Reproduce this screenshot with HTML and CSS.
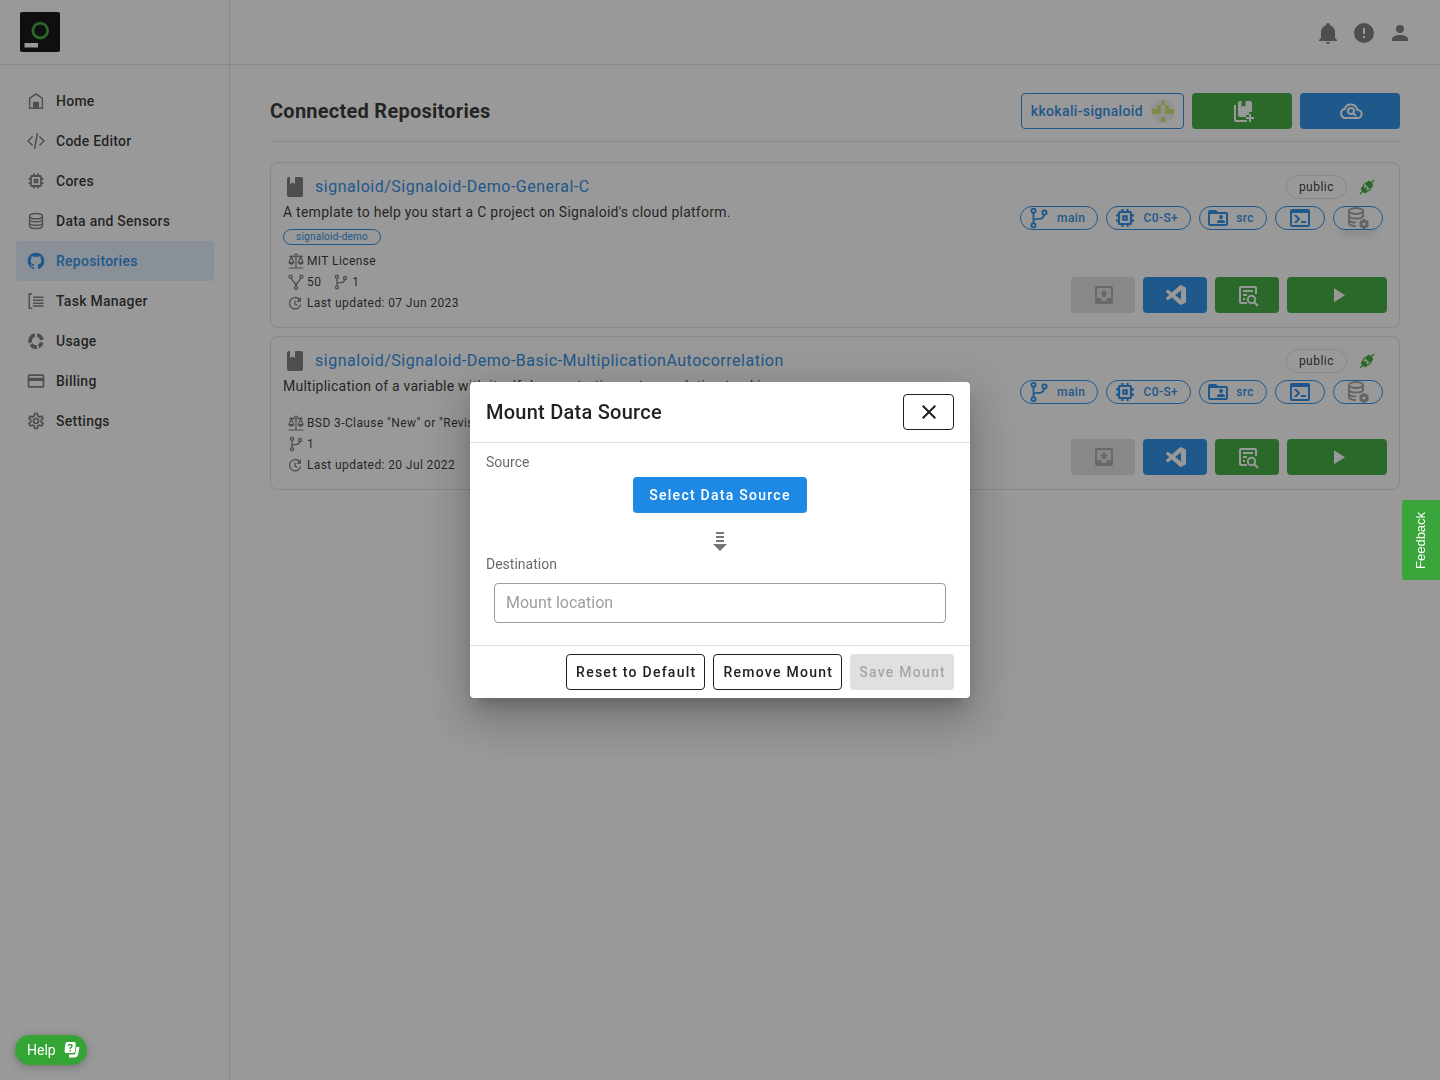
FILE: index.html
```html
<!DOCTYPE html>
<html lang="en">
  <head>
    <meta charset="utf-8">
    <title>Connected Repositories</title>
    <link rel="stylesheet" href="styles.css">
  </head>
  <body>
    <!-- Shared icons -->
    <svg class="sprite" aria-hidden="true">
      <symbol id="book" viewBox="0 0 24 24"><path d="M6 2H7V9L9.500 7.500L12 9V2H18A2 2 0 0 1 20 4V20A2 2 0 0 1 18 22H6A2 2 0 0 1 4 20V4A2 2 0 0 1 6 2Z"/></symbol>
      <symbol id="branch" viewBox="0 0 24 24"><g fill="none" stroke="currentColor" stroke-width="2"><circle cx="6" cy="4" r="2.300"/><circle cx="6" cy="20" r="2.300"/><circle cx="18" cy="6" r="2.300"/><path d="M6 6.500V17.500M6 15.500C6 13 8 13 11 13C14.500 13 17 12 17.500 8.500"/></g></symbol>
      <symbol id="fork" viewBox="0 0 24 24"><g fill="none" stroke="currentColor" stroke-width="2"><circle cx="4" cy="4" r="2.300"/><circle cx="20" cy="4" r="2.300"/><circle cx="12" cy="20.500" r="2.300"/><path d="M5 6.500C6 11 12 12 12 18C12 12 18 11 19 6.500"/></g></symbol>
      <symbol id="chip" viewBox="-2 -2 28 28"><path fill="none" stroke="currentColor" stroke-width="2.500" d="M6 5H18A1 1 0 0 1 19 6V18A1 1 0 0 1 18 19H6A1 1 0 0 1 5 18V6A1 1 0 0 1 6 5ZM10 10H14V14H10ZM9 1.500V5M15 1.500V5M9 19V22.500M15 19V22.500M1.500 9H5M1.500 15H5M19 9H22.500M19 15H22.500"/></symbol>
      <symbol id="database" viewBox="0 0 24 24"><g fill="none" stroke="currentColor" stroke-width="2"><ellipse cx="12" cy="5.500" rx="8.500" ry="3.500"/><path d="M3.500 5.500V18.500C3.500 23 20.500 23 20.500 18.500V5.500M3.500 10C3.500 14 20.500 14 20.500 10M3.500 14.500C3.500 18.500 20.500 18.500 20.500 14.500"/></g></symbol>
      <symbol id="database-cog" viewBox="0 0 24 24"><g fill="none" stroke="currentColor" stroke-width="2"><ellipse cx="10" cy="5" rx="7" ry="3"/><path d="M3 5V17C3 19 6 20 10 20M17 5V11M3 9.500C3 13.500 17 13.500 17 9.500M3 13.500C3 15.500 6 16.500 10 16.500"/></g><path fill-rule="evenodd" d="M16.500 13H19.500L19.900 14.700L21.500 14.200L23 16.700L21.800 18L23 19.300L21.500 21.800L19.900 21.300L19.500 23H16.500L16.100 21.300L14.500 21.800L13 19.300L14.200 18L13 16.700L14.500 14.200L16.100 14.700ZM18 16.400A1.600 1.600 0 1 0 18 19.600A1.600 1.600 0 1 0 18 16.400Z"/></symbol>
      <symbol id="folder" viewBox="0 0 24 24"><path fill-rule="evenodd" d="M4 4H10L12 6H20A2 2 0 0 1 22 8V18A2 2 0 0 1 20 20H4A2 2 0 0 1 2 18V6A2 2 0 0 1 4 4ZM4 8V18H20V8Z"/><circle cx="15" cy="11" r="2"/><path d="M11 17V16C11 14.500 13 14 15 14S19 14.500 19 16V17Z"/></symbol>
      <symbol id="console" viewBox="0 0 24 24"><path d="M20,19V7H4V19H20M20,3A2,2 0 0,1 22,5V19A2,2 0 0,1 20,21H4A2,2 0 0,1 2,19V5C2,3.89 2.9,3 4,3H20M13,17V15H18V17H13M9.58,13L5.57,9H8.4L11.7,12.3C12.09,12.69 12.09,13.33 11.7,13.72L8.42,17H5.59L9.58,13Z"/></symbol>
      <symbol id="plug" viewBox="0 0 24 24"><g transform="rotate(45 12 12)"><path d="M6.500 9.500V6A3.500 3.500 0 0 1 10 2.500H11V-3H13V2.500H14A3.500 3.500 0 0 1 17.500 6V9.500H19V11.200H5V9.500ZM5 12.800H8.500V15.500H10.500V12.800H13.500V15.500H15.500V12.800H19V14.500H17.500V18A3.500 3.500 0 0 1 14 21.500H13V27H11V21.500H10A3.500 3.500 0 0 1 6.500 18V14.500H5Z"/></g></symbol>
      <symbol id="scale" viewBox="0 0 24 24"><path fill="none" stroke="currentColor" stroke-width="1.800" d="M1 22.500H23M12 5V22M2 5H9M15 5H22M5 5L1.500 14.500H8.500ZM19 5L15.500 14.500H22.500ZM2 15Q5 18 8 15M16 15Q19 18 22 15"/><circle cx="12" cy="4" r="2.300" fill="none" stroke="currentColor" stroke-width="1.800"/></symbol>
      <symbol id="update" viewBox="0 0 24 24"><path fill="none" stroke="currentColor" stroke-width="2" d="M17 6.500A8.500 8.500 0 1 0 19 14.500M10.500 8.500V13.500L14 15.500"/><path d="M19.500 3V10H12.500Z"/></symbol>
      <symbol id="inbox-up" viewBox="0 0 24 24"><path d="M14,14H10V11H8L12,7L16,11H14V14M5,15V5H19V15H15A3,3 0 0,1 12,18A3,3 0 0,1 9,15H5M19,3H5C3.89,3 3,3.9 3,5V19A2,2 0 0,0 5,21H19A2,2 0 0,0 21,19V5A2,2 0 0,0 19,3"/></symbol>
      <symbol id="vscode" viewBox="0 0 24 24"><path fill-rule="evenodd" d="M23.15 2.587L18.21 .21A1.494 1.494 0 0 0 16.505 .5L7.046 9.13L2.926 6.002A1 1 0 0 0 1.65 6.059L.33 7.26A1 1 0 0 0 .33 8.738L3.9 12L.326 15.26A1 1 0 0 0 .327 16.739L1.65 17.94A1 1 0 0 0 2.926 17.997L7.046 14.869L16.506 23.499A1.492 1.492 0 0 0 18.21 23.788L23.152 21.411A1.5 1.5 0 0 0 24 20.06V3.939A1.5 1.5 0 0 0 23.15 2.587M18 17.448L10.826 12L18 6.552Z"/></symbol>
      <symbol id="doc-search" viewBox="0 0 24 24"><g fill="none" stroke="currentColor" stroke-width="2"><path d="M11 20H5A1 1 0 0 1 4 19V5A1 1 0 0 1 5 4H19A1 1 0 0 1 20 5V11M7 8H17M7 12H11M7 16H9"/><circle cx="15.500" cy="16.500" r="3.700"/><path d="M18.200 19.200L22 23"/></g></symbol>
      <symbol id="play" viewBox="0 0 24 24"><path d="M8,5.140V19.140L19,12.140L8,5.140Z"/></symbol>
    </svg>

    <div class="layout">
      <aside class="sidebar">
        <div class="brand">
          <a href="#" aria-label="Signaloid">
            <svg class="logo" viewBox="0 0 40 40"><rect width="40" height="40" rx="2" fill="#000"/><circle cx="20.300" cy="18.600" r="7.400" fill="none" stroke="#37a437" stroke-width="2.800"/><rect x="4.500" y="31" width="13.500" height="4.500" fill="#fff"/></svg>
          </a>
        </div>
        <nav class="menu">
          <a href="#"><svg class="icon-s" viewBox="0 0 24 24"><path fill="none" stroke="currentColor" stroke-width="2" d="M3.500 8.500L12 2.500L20.500 8.500V21.500H3.500Z"/><path d="M8 13H16V21H8Z"/></svg>Home</a>
          <a href="#"><svg class="icon-s" viewBox="0 0 24 24"><path fill="none" stroke="currentColor" stroke-width="2" d="M7.500 6L1.500 12L7.500 18M16.500 6L22.500 12L16.500 18M14 1.500L10 22.500"/></svg>Code Editor</a>
          <a href="#"><svg class="icon-m"><use href="#chip"/></svg>Cores</a>
          <a href="#"><svg class="icon-s"><use href="#database"/></svg>Data and Sensors</a>
          <a href="#" class="active"><svg class="icon-m" viewBox="0 0 24 24"><path d="M12,2A10,10 0 0,0 2,12C2,16.42 4.87,20.17 8.84,21.5C9.34,21.58 9.5,21.27 9.5,21C9.5,20.77 9.5,20.14 9.5,19.31C6.73,19.91 6.14,17.97 6.14,17.97C5.68,16.81 5.03,16.5 5.03,16.5C4.12,15.88 5.1,15.9 5.1,15.9C6.1,15.97 6.63,16.93 6.63,16.93C7.5,18.45 8.97,18 9.54,17.76C9.63,17.11 9.89,16.67 10.17,16.42C7.95,16.17 5.62,15.31 5.62,11.5C5.62,10.39 6,9.5 6.65,8.79C6.55,8.54 6.2,7.5 6.75,6.15C6.75,6.15 7.59,5.88 9.5,7.17C10.29,6.95 11.15,6.84 12,6.84C12.85,6.84 13.71,6.95 14.5,7.17C16.41,5.88 17.25,6.15 17.25,6.15C17.8,7.5 17.45,8.54 17.35,8.79C18,9.5 18.38,10.39 18.38,11.5C18.38,15.32 16.04,16.16 13.81,16.41C14.17,16.72 14.5,17.33 14.5,18.26C14.5,19.6 14.5,20.68 14.5,21C14.5,21.27 14.66,21.59 15.17,21.5C19.14,20.16 22,16.42 22,12A10,10 0 0,0 12,2Z"/></svg>Repositories</a>
          <a href="#"><svg class="icon-s" viewBox="0 0 24 24"><path fill="none" stroke="currentColor" stroke-width="2" d="M7 2.500H3V21.500H7M8 7H22M8 11H22M8 15H22M8 18.500H22"/></svg>Task Manager</a>
          <a href="#"><svg class="icon-s" viewBox="0 0 24 24"><g fill="none" stroke="currentColor" stroke-width="5"><path d="M13.500 4A8 8 0 0 1 19.800 10.500M19.800 14A8 8 0 0 1 15.500 19.200M13.500 20A8 8 0 0 1 5.500 16.500M4.500 14.500A8 8 0 0 1 10.500 4"/></g></svg>Usage</a>
          <a href="#"><svg class="icon-m" viewBox="0 0 24 24"><path d="M20,4H4A2,2 0 0,0 2,6V18A2,2 0 0,0 4,20H20A2,2 0 0,0 22,18V6A2,2 0 0,0 20,4M20,18H4V12H20V18M20,8H4V6H20V8Z"/></svg>Billing</a>
          <a href="#"><svg class="icon-m" viewBox="0 0 24 24"><path d="M12,8A4,4 0 0,1 16,12A4,4 0 0,1 12,16A4,4 0 0,1 8,12A4,4 0 0,1 12,8M12,10A2,2 0 0,0 10,12A2,2 0 0,0 12,14A2,2 0 0,0 14,12A2,2 0 0,0 12,10M10,22C9.75,22 9.54,21.82 9.5,21.58L9.13,18.93C8.5,18.68 7.96,18.34 7.44,17.94L4.95,18.95C4.73,19.03 4.46,18.95 4.34,18.73L2.34,15.27C2.21,15.05 2.27,14.78 2.46,14.63L4.57,12.97L4.5,12L4.57,11L2.46,9.37C2.27,9.22 2.21,8.95 2.34,8.73L4.34,5.27C4.46,5.05 4.73,4.96 4.95,5.05L7.44,6.05C7.96,5.66 8.5,5.32 9.13,5.07L9.5,2.42C9.54,2.18 9.75,2 10,2H14C14.25,2 14.46,2.18 14.5,2.42L14.87,5.07C15.5,5.32 16.04,5.66 16.56,6.05L19.05,5.05C19.27,4.96 19.54,5.05 19.66,5.27L21.66,8.73C21.79,8.95 21.73,9.22 21.54,9.37L19.43,11L19.5,12L19.43,13L21.54,14.63C21.73,14.78 21.79,15.05 21.66,15.27L19.66,18.73C19.54,18.95 19.27,19.04 19.05,18.95L16.56,17.95C16.04,18.34 15.5,18.68 14.87,18.93L14.5,21.58C14.46,21.82 14.25,22 14,22H10M11.25,4L10.88,6.61C9.68,6.86 8.62,7.5 7.85,8.39L5.44,7.35L4.69,8.65L6.8,10.2C6.4,11.37 6.4,12.64 6.8,13.8L4.68,15.36L5.43,16.66L7.86,15.62C8.63,16.5 9.68,17.14 10.87,17.38L11.24,20H12.76L13.13,17.39C14.32,17.14 15.37,16.5 16.14,15.62L18.57,16.66L19.32,15.36L17.2,13.81C17.6,12.64 17.6,11.37 17.2,10.2L19.31,8.65L18.56,7.35L16.15,8.39C15.38,7.5 14.32,6.86 13.12,6.62L12.75,4H11.25Z"/></svg>Settings</a>
        </nav>
      </aside>

      <div class="page">
        <header class="topbar">
          <button type="button" aria-label="Notifications"><svg class="icon" viewBox="0 0 24 24"><path d="M21,19V20H3V19L5,17V11C5,7.9 7.03,5.17 10,4.29C10,4.19 10,4.1 10,4A2,2 0 0,1 12,2A2,2 0 0,1 14,4C14,4.1 14,4.19 14,4.29C16.97,5.17 19,7.9 19,11V17L21,19M14,21A2,2 0 0,1 12,23A2,2 0 0,1 10,21"/></svg></button>
          <button type="button" aria-label="Alerts"><svg class="icon" viewBox="0 0 24 24"><path d="M13,13H11V7H13M13,17H11V15H13M12,2A10,10 0 0,0 2,12A10,10 0 0,0 12,22A10,10 0 0,0 22,12A10,10 0 0,0 12,2Z"/></svg></button>
          <button type="button" aria-label="Account"><svg class="icon" viewBox="0 0 24 24"><path d="M12,4A4,4 0 0,1 16,8A4,4 0 0,1 12,12A4,4 0 0,1 8,8A4,4 0 0,1 12,4M12,14C16.42,14 20,15.79 20,18V20H4V18C4,15.79 7.58,14 12,14Z"/></svg></button>
        </header>

        <main class="content">
          <div class="heading">
            <h1>Connected Repositories</h1>
            <button type="button" class="btn user">kkokali-signaloid
              <svg class="icon" viewBox="0 0 24 24"><circle cx="12" cy="12" r="12" fill="#f0f0f0"/><path fill="#d3e06c" d="M10 2H14V6H10ZM6 6H10V10H6ZM14 6H18V10H14ZM1 10H10V15H1ZM14 10H23V15H14ZM10 18H14V23H10Z"/></svg>
            </button>
            <button type="button" class="btn green wide" aria-label="Add repository"><svg class="icon" viewBox="-2 -1 24 24"><path d="M1 5H3V20H14V22H3A2 2 0 0 1 1 20ZM7 1H8.500V7L10.500 5.500L12.500 7V1H17A2 2 0 0 1 19 3V12H16V15H13V17H7A2 2 0 0 1 5 15V3A2 2 0 0 1 7 1ZM16 14H18V17H21V19H18V22H16V19H13V17H16Z"/></svg></button>
            <button type="button" class="btn blue wide" aria-label="Search cloud"><svg class="icon" viewBox="0 0 24 24"><g fill="none" stroke="currentColor" stroke-width="2"><path d="M6.500 19A4.500 4.500 0 0 1 5.700 10.100A6.500 6.500 0 0 1 18.300 11A4 4 0 0 1 19 19Z"/><circle cx="12" cy="12" r="3"/><path d="M14 14L17 17"/></g></svg></button>
          </div>

          <article class="repo">
            <div class="info">
              <h2><svg class="icon"><use href="#book"/></svg><a href="#">signaloid/Signaloid-Demo-General-C</a></h2>
              <p>A template to help you start a C project on Signaloid's cloud platform.</p>
              <div class="topics"><span class="topic">signaloid-demo</span></div>
              <ul class="meta">
                <li><svg class="icon-xs"><use href="#scale"/></svg>MIT License</li>
                <li><svg class="icon-xs"><use href="#fork"/></svg>50 <svg class="icon-xs next"><use href="#branch"/></svg>1</li>
                <li><svg class="icon-xs"><use href="#update"/></svg>Last updated: 07 Jun 2023</li>
              </ul>
            </div>
            <div class="actions">
              <div class="status"><span class="public">public</span><svg class="icon-xs"><use href="#plug"/></svg></div>
              <div class="chips">
                <button type="button"><svg class="icon branch"><use href="#branch"/></svg>main</button>
                <button type="button"><svg class="icon"><use href="#chip"/></svg>C0-S+</button>
                <button type="button"><svg class="icon"><use href="#folder"/></svg>src</button>
                <button type="button" class="only" aria-label="Console"><svg class="icon"><use href="#console"/></svg></button>
                <button type="button" class="only data raised" aria-label="Data source"><svg class="icon"><use href="#database-cog"/></svg></button>
              </div>
              <div class="buttons">
                <button type="button" class="btn" disabled aria-label="Upload"><svg class="icon"><use href="#inbox-up"/></svg></button>
                <button type="button" class="btn blue" aria-label="Open in editor"><svg class="icon-m"><use href="#vscode"/></svg></button>
                <button type="button" class="btn green" aria-label="View build log"><svg class="icon"><use href="#doc-search"/></svg></button>
                <button type="button" class="btn green wide" aria-label="Run"><svg class="icon"><use href="#play"/></svg></button>
              </div>
            </div>
          </article>

          <article class="repo">
            <div class="info">
              <h2><svg class="icon"><use href="#book"/></svg><a href="#">signaloid/Signaloid-Demo-Basic-MultiplicationAutocorrelation</a></h2>
              <p>Multiplication of a variable with itself demonstrating autocorrelation tracking.</p>
              <div class="topics"></div>
              <ul class="meta">
                <li><svg class="icon-xs"><use href="#scale"/></svg>BSD 3-Clause "New" or "Revised" License</li>
                <li><svg class="icon-xs"><use href="#branch"/></svg>1</li>
                <li><svg class="icon-xs"><use href="#update"/></svg>Last updated: 20 Jul 2022</li>
              </ul>
            </div>
            <div class="actions">
              <div class="status"><span class="public">public</span><svg class="icon-xs"><use href="#plug"/></svg></div>
              <div class="chips">
                <button type="button"><svg class="icon branch"><use href="#branch"/></svg>main</button>
                <button type="button"><svg class="icon"><use href="#chip"/></svg>C0-S+</button>
                <button type="button"><svg class="icon"><use href="#folder"/></svg>src</button>
                <button type="button" class="only" aria-label="Console"><svg class="icon"><use href="#console"/></svg></button>
                <button type="button" class="only data" aria-label="Data source"><svg class="icon"><use href="#database-cog"/></svg></button>
              </div>
              <div class="buttons">
                <button type="button" class="btn" disabled aria-label="Upload"><svg class="icon"><use href="#inbox-up"/></svg></button>
                <button type="button" class="btn blue" aria-label="Open in editor"><svg class="icon-m"><use href="#vscode"/></svg></button>
                <button type="button" class="btn green" aria-label="View build log"><svg class="icon"><use href="#doc-search"/></svg></button>
                <button type="button" class="btn green wide" aria-label="Run"><svg class="icon"><use href="#play"/></svg></button>
              </div>
            </div>
          </article>
        </main>
      </div>
    </div>

    <div class="overlay">
      <form class="dialog" role="dialog" aria-labelledby="dialog-title">
        <div class="dialog-head">
          <h2 id="dialog-title">Mount Data Source</h2>
          <button type="button" class="btn outlined" aria-label="Close"><svg class="icon" viewBox="0 0 24 24"><path d="M19,6.41L17.59,5L12,10.59L6.41,5L5,6.41L10.59,12L5,17.59L6.41,19L12,13.41L17.59,19L19,17.59L13.41,12L19,6.41Z"/></svg></button>
        </div>
        <div class="dialog-body">
          <span class="label">Source</span>
          <button type="button" class="btn blue select">Select Data Source</button>
          <svg class="icon arrow" viewBox="0 0 24 24"><path d="M8 3H16V5H8ZM8 7H16V9H8ZM8 11H16V13H8ZM5 15H19L12 22Z"/></svg>
          <label class="label" for="mount">Destination</label>
          <input type="text" id="mount" placeholder="Mount location">
        </div>
        <div class="dialog-foot">
          <button type="button" class="btn outlined">Reset to Default</button>
          <button type="button" class="btn outlined">Remove Mount</button>
          <button type="submit" class="btn" disabled>Save Mount</button>
        </div>
      </form>
    </div>

    <button type="button" class="feedback">Feedback</button>
    <button type="button" class="help">Help
      <svg class="icon-xs" viewBox="0 0 16 16"><path fill="none" stroke="#fff" stroke-width="3" d="M14 5L12.500 12.500Q12 14 10.500 14H5"/><rect x="1.500" y="0" width="10.500" height="11" rx="2" fill="#fff" transform="skewX(-6)"/><path fill="none" stroke="#34a534" stroke-width="1.500" d="M4.500 4Q4.500 2.500 6.200 2.500T8 4Q8 5 6.200 6V7M6.200 8V9.500"/></svg>
    </button>
  </body>
</html>
```
FILE: styles.css
```css
* {
  box-sizing: border-box;
}

body {
  margin: 0;
  background: #fff;
  color: rgba(0, 0, 0, 0.87);
  font-family: Roboto, sans-serif;
  font-size: 14px;
  line-height: 20px;
}

h1, h2, p, ul {
  margin: 0;
  padding: 0;
}

a {
  color: #1e88e5;
  text-decoration: none;
}

button {
  font-family: inherit;
  cursor: pointer;
}

svg {
  display: block;
  flex: none;
  overflow: visible;
  fill: currentColor;
}

.sprite {
  position: absolute;
  width: 0;
  height: 0;
}

.icon {
  width: 24px;
  height: 24px;
}

.icon-m {
  width: 20px;
  height: 20px;
}

.icon-s {
  width: 18px;
  height: 18px;
}

.icon-xs {
  width: 16px;
  height: 16px;
}

.layout {
  display: flex;
  min-height: 100vh;
}

/* Sidebar */
.sidebar {
  flex: none;
  width: 230px;
  border-right: 1px solid #e0e0e0;
}

.brand {
  height: 65px;
  padding: 12px 20px;
  border-bottom: 1px solid #e0e0e0;
}

.logo {
  width: 40px;
  height: 40px;
}

.menu {
  padding: 16px 15px 16px 16px;
}

.menu a {
  display: grid;
  grid-template-columns: 20px 1fr;
  gap: 10px;
  align-items: center;
  height: 40px;
  padding: 0 10px;
  border-radius: 4px;
  color: rgba(0, 0, 0, 0.87);
  font-weight: 500;
  letter-spacing: 0.018em;
}

.menu svg {
  justify-self: center;
  color: #757575;
}

.menu .active,
.menu .active svg {
  color: #1e88e5;
}

.menu .active {
  background: #e1effb;
}

/* Page */
.page {
  flex: 1;
  min-width: 0;
}

.topbar {
  display: flex;
  justify-content: flex-end;
  align-items: center;
  gap: 12px;
  height: 65px;
  padding: 2px 28px 0;
  border-bottom: 1px solid #e0e0e0;
}

.topbar button {
  padding: 0;
  border: 0;
  background: none;
  color: #757575;
}

.content {
  padding: 28px 40px;
}

.heading {
  display: flex;
  align-items: center;
  gap: 8px;
  margin-bottom: 20px;
  padding-bottom: 12px;
  border-bottom: 1px solid #e0e0e0;
}

h1 {
  flex: 1;
  font-size: 20px;
  font-weight: 700;
  line-height: 32px;
  letter-spacing: 0.0125em;
}

.btn {
  display: flex;
  align-items: center;
  justify-content: center;
  height: 36px;
  min-width: 64px;
  padding: 0 8px 0 9px;
  border: 0;
  border-radius: 4px;
  font-size: 14px;
  font-weight: 500;
  letter-spacing: 0.09em;
}

.btn:disabled {
  background: #e0e0e0;
  color: #a6a6a6;
}

.blue {
  background: #1e88e5;
  color: #fff;
}

.green {
  background: #34a634;
  color: #fff;
}

.wide {
  width: 100px;
}

.user {
  gap: 8px;
  border: 1px solid #1e88e5;
  background: none;
  color: #1e88e5;
  letter-spacing: 0.025em;
}

/* Repository cards */
.repo {
  display: flex;
  justify-content: space-between;
  margin-bottom: 8px;
  padding: 12px 12px 14px;
  border: 1px solid #e0e0e0;
  border-radius: 8px;
}

.repo h2 {
  display: flex;
  align-items: center;
  gap: 8px;
  font-size: 16px;
  font-weight: 400;
  line-height: 24px;
  letter-spacing: 0.032em;
}

.repo h2 svg {
  color: #757575;
}

.repo p {
  margin-top: 3px;
  letter-spacing: 0.018em;
}

.topics {
  min-height: 16px;
  margin: 7px 0 6px;
}

.topic {
  display: block;
  width: fit-content;
  padding: 0 12px;
  border: 1px solid #1e88e5;
  border-radius: 8px;
  color: #1e88e5;
  font-size: 10px;
  line-height: 14px;
  letter-spacing: 0.025em;
}

.topics:empty {
  min-height: 4px;
}

.meta {
  display: grid;
  gap: 1px;
  padding-left: 5px;
  list-style: none;
  font-size: 12px;
  letter-spacing: 0.033em;
}

.meta li {
  display: flex;
  align-items: center;
  gap: 3px;
  height: 20px;
}

.meta svg {
  color: #757575;
}

.meta .next {
  margin-left: 9px;
}

.actions {
  display: flex;
  flex-direction: column;
  align-items: flex-end;
}

.status {
  display: flex;
  align-items: center;
  gap: 12px;
  padding-right: 12px;
  color: #34a634;
}

.public {
  padding: 0 12px;
  border: 1px solid #e0e0e0;
  border-radius: 12px;
  color: rgba(0, 0, 0, 0.87);
  font-size: 12px;
  line-height: 22px;
  letter-spacing: 0.04em;
}

.chips {
  display: flex;
  gap: 8px;
  margin-top: 7px;
  padding-right: 4px;
}

.chips button {
  display: flex;
  align-items: center;
  gap: 6px;
  height: 24px;
  padding: 0 12px 0 6px;
  border: 1px solid #1e88e5;
  border-radius: 12px;
  background: none;
  color: #1e88e5;
  font-size: 12px;
  font-weight: 500;
  letter-spacing: 0.035em;
}

.chips .branch {
  padding: 1px;
}

.chips .only {
  padding: 0 12px;
}

.chips .data svg {
  color: #9e9e9e;
}

.chips .raised {
  box-shadow: 0 12px 8px -6px rgba(0, 0, 0, 0.1);
}

.buttons {
  display: flex;
  gap: 8px;
  margin-top: auto;
}

/* Dialog */
.overlay {
  position: fixed;
  inset: 0;
  display: flex;
  align-items: center;
  justify-content: center;
  background: rgba(33, 33, 33, 0.46);
}

.dialog {
  width: 500px;
  border-radius: 4px;
  background: #fff;
  box-shadow: 0 11px 15px -7px rgba(0, 0, 0, 0.2), 0 24px 38px 3px rgba(0, 0, 0, 0.14), 0 9px 46px 8px rgba(0, 0, 0, 0.12);
}

.dialog-head {
  display: flex;
  align-items: center;
  justify-content: space-between;
  padding: 12px 16px;
  border-bottom: 1px solid #e0e0e0;
}

.dialog-head h2 {
  font-size: 20px;
  font-weight: 500;
  letter-spacing: 0.0125em;
}

.dialog-head .btn {
  min-width: 51px;
}

.outlined {
  border: 1px solid #212121;
  background: none;
  color: #212121;
}

.dialog-body {
  display: flex;
  flex-direction: column;
  padding: 8px 16px 22px;
}

.label {
  color: rgba(0, 0, 0, 0.6);
  line-height: 22px;
}

.select {
  align-self: center;
  margin: 4px 0 16px;
  padding: 0 16px;
}

.arrow {
  align-self: center;
  color: #757575;
}

.dialog-body input {
  height: 40px;
  margin: 8px 8px 0;
  padding: 0 11px 1px;
  border: 1px solid #9e9e9e;
  border-radius: 4px;
  font: 16px Roboto, sans-serif;
}

.dialog-body input::placeholder {
  color: #9e9e9e;
}

.dialog-foot {
  display: flex;
  justify-content: flex-end;
  gap: 8px;
  padding: 8px 16px;
  border-top: 1px solid #e0e0e0;
}

/* Floating buttons */
.feedback {
  position: fixed;
  top: 50%;
  right: 0;
  width: 38px;
  height: 80px;
  margin-top: -40px;
  padding: 0;
  border: 0;
  border-radius: 0 3px 3px 0;
  background: #3aa53a;
  color: #fff;
  font: 13px "Liberation Sans", sans-serif;
  writing-mode: vertical-rl;
  transform: rotate(180deg);
}

.help {
  position: fixed;
  bottom: 15px;
  left: 15px;
  display: flex;
  align-items: center;
  gap: 8px;
  height: 30px;
  padding: 0 7px 0 12px;
  border: 0;
  border-radius: 15px;
  background: #34a534;
  color: #fff;
  font-size: 14px;
  box-shadow: 0 2px 8px rgba(0, 0, 0, 0.25);
}
```
